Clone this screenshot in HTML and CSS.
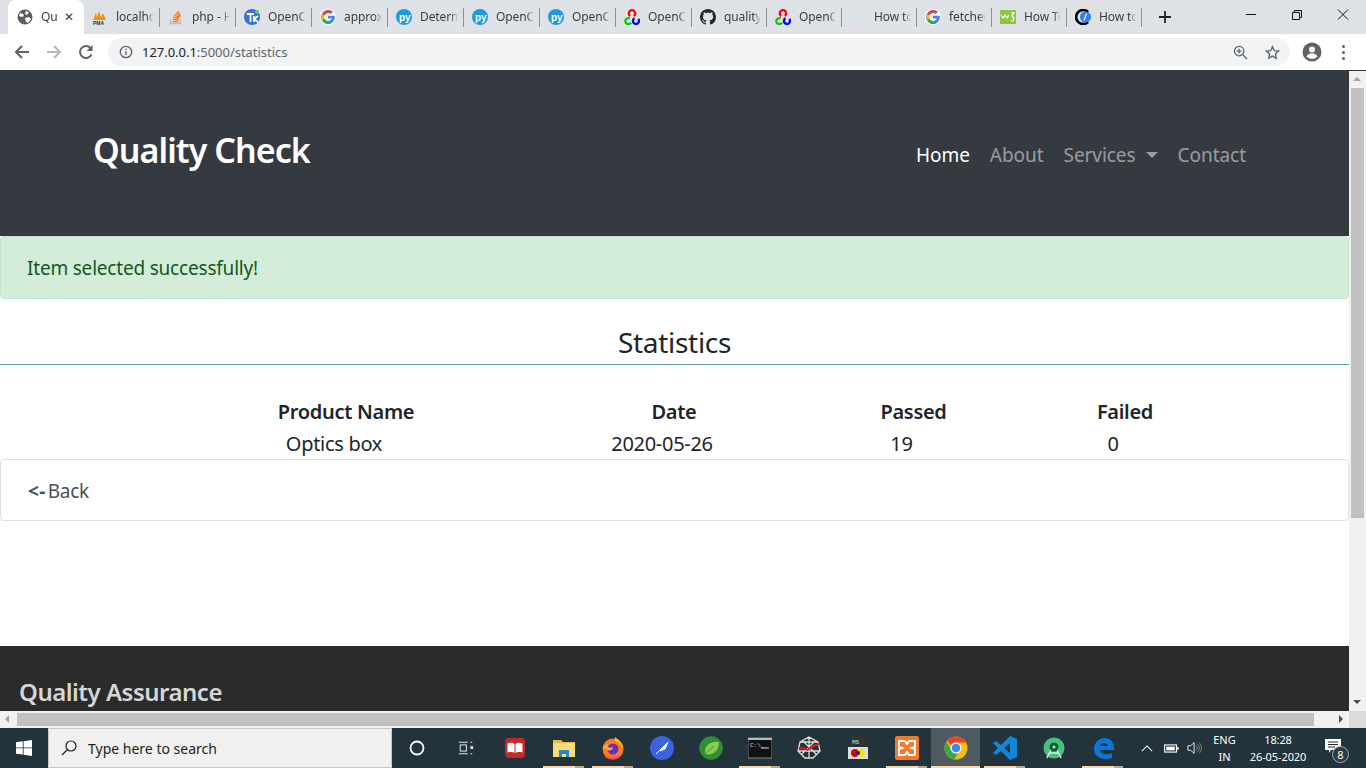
FILE: index.html
```html
<!DOCTYPE html>
<html lang="en">
<head>
<meta charset="utf-8">
<title>Quality Check</title>
<link rel="stylesheet" href="styles.css">
</head>
<body>
<div class="tabstrip">
  <div class="tab active">
    <svg class="fav" viewBox="0 0 16 16"><circle cx="8" cy="8" r="7.5" fill="#5a5d61"/><path d="M3 4l3 1 1 2-2 1-3-1zM9 2l3 1-1 2-2 1-1-2zM8 9l4-1 2 2-3 4-2-1z" fill="#fff"/></svg>
    <span class="tt">Qu</span><span class="close">✕</span>
  </div>
  <div class="tab"><svg class="fav" viewBox="0 0 16 16"><path d="M1 11l3-7 1 4 2-6 2 6 2-4 3 7z" fill="#f29111"/><text x="1" y="15.5" class="favt">PMA</text></svg><span class="tt">localhost</span></div>
  <div class="tab"><svg class="fav" viewBox="0 0 16 16"><path d="M2.500 10v4.500h10V10" fill="none" stroke="#bcbbbb" stroke-width="1.400"/><path d="M4.500 12.500h6M4.700 10.300l6 .6M5.200 8l5.800 1.500M6.300 5.600l5.200 3M8 3.500l4 4.400M10 2l2.400 5.400" stroke="#f48024" stroke-width="1.300" fill="none"/></svg><span class="tt">php - H</span></div>
  <div class="tab"><svg class="fav" viewBox="0 0 16 16"><circle cx="8" cy="8" r="8" fill="#3b6fd8"/><path d="M3 5h7M6.500 5v8M10 7v6M14 7l-4 3 4 3" stroke="#fff" stroke-width="1.800" fill="none"/><circle cx="13" cy="3" r="2" fill="#5cc96b"/></svg><span class="tt">OpenCV</span></div>
  <div class="tab"><svg class="fav" viewBox="0 0 48 48"><circle cx="24" cy="24" r="24" fill="#fff"/><path d="M43.600 20H24v8.500h11.300C33.700 33.400 29.300 36.500 24 36.500A12.500 12.500 0 1 1 32.200 14.600l6-6A21 21 0 1 0 45 24c0-1.300-.6-2.700-1.400-4z" fill="#4285f4"/><path d="M6.300 14.700l7 5.100A12.500 12.500 0 0 1 32.200 14.600l6-6A21 21 0 0 0 6.300 14.700z" fill="#ea4335"/><path d="M24 45a21 21 0 0 0 14-5.400l-6.500-5.500a12.500 12.500 0 0 1-18.300-5.700l-7 5.400A21 21 0 0 0 24 45z" fill="#34a853"/><path d="M13.200 28.400a12.500 12.500 0 0 1 0-8.600l-7-5.100a21 21 0 0 0 0 19.100z" fill="#fbbc05"/></svg><span class="tt">approx</span></div>
  <div class="tab"><svg class="fav" viewBox="0 0 16 16"><circle cx="8" cy="8" r="8" fill="#1a9be0"/><text x="3" y="11.500" class="favp">py</text></svg><span class="tt">Determ</span></div>
  <div class="tab"><svg class="fav" viewBox="0 0 16 16"><circle cx="8" cy="8" r="8" fill="#1a9be0"/><text x="3" y="11.500" class="favp">py</text></svg><span class="tt">OpenCV</span></div>
  <div class="tab"><svg class="fav" viewBox="0 0 16 16"><circle cx="8" cy="8" r="8" fill="#1a9be0"/><text x="3" y="11.500" class="favp">py</text></svg><span class="tt">OpenCV</span></div>
  <div class="tab"><svg class="fav" viewBox="0 0 16 16"><path d="M6.200 7A3.200 3.200 0 1 1 9.800 7" fill="none" stroke="#f00" stroke-width="2.300"/><path d="M5.800 9.500A3 3 0 1 0 7 13.500" fill="none" stroke="#0c0" stroke-width="2.300"/><path d="M10.500 9.300A3 3 0 1 0 14.300 10" fill="none" stroke="#00f" stroke-width="2.300"/></svg><span class="tt">OpenCV</span></div>
  <div class="tab"><svg class="fav" viewBox="0 0 16 16"><path fill="#24292e" d="M8 0C3.580 0 0 3.580 0 8c0 3.540 2.290 6.530 5.470 7.590.4.070.55-.17.55-.38 0-.19-.01-.82-.01-1.490-2.010.37-2.530-.49-2.690-.94-.09-.23-.48-.94-.82-1.130-.28-.15-.68-.52-.01-.53.630-.01 1.080.58 1.230.82.720 1.210 1.870.87 2.330.66.070-.52.280-.87.510-1.070-1.780-.2-3.640-.89-3.640-3.950 0-.87.310-1.590.820-2.150-.08-.2-.36-1.020.08-2.120 0 0 .67-.21 2.200.82.640-.18 1.320-.27 2-.27s1.360.09 2 .27c1.530-1.040 2.200-.82 2.200-.82.440 1.100.16 1.920.08 2.120.51.560.82 1.270.82 2.150 0 3.070-1.870 3.750-3.650 3.950.29.250.54.730.54 1.480 0 1.070-.01 1.930-.01 2.200 0 .21.150.46.550.38A8 8 0 0 0 16 8c0-4.420-3.580-8-8-8z"/></svg><span class="tt">quality</span></div>
  <div class="tab"><svg class="fav" viewBox="0 0 16 16"><path d="M6.200 7A3.200 3.200 0 1 1 9.800 7" fill="none" stroke="#f00" stroke-width="2.300"/><path d="M5.800 9.500A3 3 0 1 0 7 13.500" fill="none" stroke="#0c0" stroke-width="2.300"/><path d="M10.500 9.300A3 3 0 1 0 14.300 10" fill="none" stroke="#00f" stroke-width="2.300"/></svg><span class="tt">OpenCV</span></div>
  <div class="tab"><svg class="fav" viewBox="0 0 16 16"><path d="M2 5h4M9 5h5M2 8h12M3 11h8" stroke="#cfe3ef" stroke-width="1.300"/></svg><span class="tt">How to</span></div>
  <div class="tab"><svg class="fav" viewBox="0 0 48 48"><circle cx="24" cy="24" r="24" fill="#fff"/><path d="M43.600 20H24v8.500h11.300C33.700 33.400 29.300 36.500 24 36.500A12.500 12.500 0 1 1 32.200 14.600l6-6A21 21 0 1 0 45 24c0-1.300-.6-2.700-1.400-4z" fill="#4285f4"/><path d="M6.300 14.700l7 5.100A12.500 12.500 0 0 1 32.200 14.600l6-6A21 21 0 0 0 6.300 14.700z" fill="#ea4335"/><path d="M24 45a21 21 0 0 0 14-5.400l-6.500-5.500a12.500 12.500 0 0 1-18.300-5.700l-7 5.400A21 21 0 0 0 24 45z" fill="#34a853"/><path d="M13.200 28.400a12.500 12.500 0 0 1 0-8.600l-7-5.100a21 21 0 0 0 0 19.100z" fill="#fbbc05"/></svg><span class="tt">fetched</span></div>
  <div class="tab"><svg class="fav" viewBox="0 0 16 16"><rect width="16" height="14" y="1" fill="#8cc63f"/><path d="M1 6l2 3 2-3 2 3 2-3" stroke="#fff" stroke-width="1.200" fill="none"/><path d="M11 4h3l-2 3 2 2-1 3h-2" stroke="#fff" stroke-width="1.200" fill="none"/></svg><span class="tt">How To</span></div>
  <div class="tab"><svg class="fav" viewBox="0 0 16 16"><path d="M13 3A7 7 0 1 0 13 13" fill="none" stroke="#000" stroke-width="2.600"/><circle cx="10.500" cy="8" r="5.500" fill="#2f7cf6"/><path d="M9 11.500L11.500 4.500" stroke="#fff" stroke-width="1.200"/></svg><span class="tt">How to</span></div>
  <div class="newtab"><svg viewBox="0 0 12 12" class="plus"><path d="M6 0v12M0 6h12" stroke="#202124" stroke-width="1.800"/></svg></div>
  <div class="wincontrols">
    <svg class="win" viewBox="0 0 46 30"><path d="M18 14.500h10" stroke="#111" stroke-width="1"/></svg>
    <svg class="win" viewBox="0 0 46 30"><path d="M18.500 12.500h7v7h-7zM20.500 12.500v-2h7v7h-2" stroke="#111" fill="none"/></svg>
    <svg class="win" viewBox="0 0 46 30"><path d="M18 9.500l10 10M28 9.500l-10 10" stroke="#111" fill="none"/></svg>
  </div>
</div>

<div class="toolbar">
  <svg class="tool" viewBox="0 0 16 16"><path d="M15 8H2M8 2L2 8l6 6" stroke="#5f6368" stroke-width="2" fill="none"/></svg>
  <svg class="tool" viewBox="0 0 16 16"><path d="M1 8h13M8 2l6 6-6 6" stroke="#b4b7ba" stroke-width="2" fill="none"/></svg>
  <svg class="tool" viewBox="0 0 16 16"><path d="M13.500 10.500A6 6 0 1 1 12.500 4" stroke="#5f6368" stroke-width="2" fill="none"/><path d="M14.500 1v6h-6z" fill="#5f6368"/></svg>
  <div class="omnibox">
    <svg class="info" viewBox="0 0 16 16"><circle cx="8" cy="8" r="6.500" fill="none" stroke="#5f6368" stroke-width="1.500"/><path d="M8 7v4.500M8 4.200v1.500" stroke="#5f6368" stroke-width="1.600"/></svg>
    <span class="url">127.0.0.1<span class="urlpath">:5000/statistics</span></span>
    <span class="spacer"></span>
    <svg class="omni-icon" viewBox="0 0 16 16"><circle cx="6.500" cy="6.500" r="5" fill="none" stroke="#5f6368" stroke-width="1.400"/><path d="M10 10l5 5M4 6.500h5M6.500 4v5" stroke="#5f6368" stroke-width="1.400"/></svg>
    <svg class="omni-icon star" viewBox="0 0 16 16"><path d="M8 1.800l1.900 4.200 4.600.5-3.400 3.100.9 4.500-4-2.300-4 2.300.9-4.500L1.500 6.500 6.100 6z" fill="none" stroke="#5f6368" stroke-width="1.400"/></svg>
  </div>
  <svg class="avatar" viewBox="0 0 20 20"><circle cx="10" cy="10" r="9.500" fill="#5f6368"/><circle cx="10" cy="7.500" r="3" fill="#fff"/><path d="M4.500 14.500c1-2.500 3.500-3 5.500-3s4.500.5 5.500 3c-1.300 1.500-3.300 2.300-5.500 2.300s-4.200-.8-5.500-2.300z" fill="#fff"/></svg>
  <div class="dots"><i></i><i></i><i></i></div>
</div>

<div class="viewport">
  <main class="page">
    <nav class="navbar">
      <a class="brand">Quality Check</a>
      <ul class="navlinks">
        <li class="on">Home</li>
        <li>About</li>
        <li>Services<span class="caret"></span></li>
        <li>Contact</li>
      </ul>
    </nav>
    <div class="alert">Item selected successfully!</div>
    <h2 class="title">Statistics</h2>
    <table class="stats">
      <colgroup><col class="c1"><col class="c2"><col class="c3"><col class="c4"></colgroup>
      <thead><tr><th>Product Name</th><th>Date</th><th>Passed</th><th>Failed</th></tr></thead>
      <tbody><tr><td>Optics box</td><td>2020-05-26</td><td>19</td><td>0</td></tr></tbody>
    </table>
    <div class="backcard"><a class="back"><b>&lt;-</b>Back</a></div>
    <footer class="footer"><h4 class="foot-title">Quality Assurance</h4></footer>
  </main>
  <div class="vscroll">
    <span class="arrow up"></span>
    <div class="vthumb"></div>
    <span class="spacer"></span>
    <span class="arrow down"></span>
  </div>
</div>
<div class="hscroll">
  <span class="arrow left"></span>
  <div class="hthumb"></div>
  <span class="spacer"></span>
  <span class="arrow right"></span>
  <span class="corner"></span>
</div>

<div class="taskbar">
  <div class="start"><svg viewBox="0 0 16 16" class="winlogo"><path d="M0 2.300l6.800-1v6.200H0zM7.600 1.200L16 0v7.500H7.600zM0 8.300h6.800v6.300L0 13.700zM7.600 8.300H16V16l-8.400-1.200z" fill="#fff"/></svg></div>
  <div class="search">
    <svg class="lens" viewBox="0 0 16 16"><circle cx="10" cy="6" r="5" fill="none" stroke="#222" stroke-width="1.200"/><path d="M6.500 9.500L1 15" stroke="#222" stroke-width="1.300"/></svg>
    <span>Type here to search</span>
  </div>
  <div class="tb cortana"><svg viewBox="0 0 16 16" class="ti"><circle cx="8" cy="8" r="6.500" fill="none" stroke="#fff" stroke-width="1.800"/></svg></div>
  <div class="tb"><svg viewBox="0 0 18 16" class="ti"><path d="M1 1.500h10M1 14.500h10M2.500 4.500h7v7h-7zM14 1.500h2M14 14.500h2" stroke="#fff" fill="none"/><rect x="14" y="6" width="3" height="3" fill="#fff"/></svg></div>
  <div class="tb"><svg viewBox="0 0 24 24" class="ti big"><rect x="2" y="2" width="20" height="20" rx="4" fill="#c62828"/><path d="M4.500 7.500c2.500-1 5.500-1 7 .6v9c-1.500-1.300-4.500-1.300-7-.6zM19.500 7.500c-2.500-1-5.500-1-7 .6v9c1.500-1.300 4.500-1.300 7-.6z" fill="#fff"/></svg></div>
  <div class="tb open"><svg viewBox="0 0 24 20" class="ti big"><path d="M1 2h8l2 2h12v15H1z" fill="#e8b93a"/><rect x="1" y="5" width="22" height="14" fill="#fadb7a"/><path d="M7 19v-7h10v7h-3v-3h-4v3z" fill="#1f88d8"/></svg></div>
  <div class="tb open"><svg viewBox="0 0 24 24" class="ti big"><circle cx="12" cy="13" r="10.500" fill="#ff7a1a"/><path d="M14 1c4 3 8 6 8 12-2-5-5-7-8-8z" fill="#ffc107"/><path d="M3 20c3 4 14 5 18-2-5 3-13 4-18 2z" fill="#f9486b"/><circle cx="12" cy="13" r="5.500" fill="#6a2fc0"/><path d="M2 12c1-3 3-4 5-4-1 3 1 5 5 3 0 3-3 4-6 3z" fill="#ffa63d"/></svg></div>
  <div class="tb"><svg viewBox="0 0 24 24" class="ti big"><circle cx="12" cy="12" r="12" fill="#3b62e0"/><path d="M6 18L18 6M11 13l7-7-3 7-5 2z" stroke="#fff" fill="#dfe6ff"/></svg></div>
  <div class="tb"><svg viewBox="0 0 24 24" class="ti big"><circle cx="12" cy="12" r="11.500" fill="#2f8f35" stroke="#2f8f35" stroke-dasharray="2 1.500"/><path d="M6 18C5 10 11 5 20 6c0 9-6 14-14 12z" fill="#8ccb52"/><path d="M6 18l9-8" stroke="#3f9e3a"/></svg></div>
  <div class="tb open"><svg viewBox="0 0 24 20" class="ti big"><rect width="24" height="20" fill="#111" stroke="#888"/><rect width="24" height="2" fill="#bbb"/><text x="2" y="9" class="cmd">C:\_</text><path d="M13 10h8" stroke="#ddd"/></svg></div>
  <div class="tb"><svg viewBox="0 0 24 24" class="ti big"><path d="M12 1l9 5 2 9-7 7H8l-7-7 2-9zM12 1v21M1 15L23 15M3 6l18 0M5 18L19 4M5 4l14 14" fill="none" stroke="#ddd" stroke-width="1.300"/><path d="M2 13c4-4 6 3 10 0s5-4 10-5" stroke="#e01919" stroke-width="2" fill="none"/></svg></div>
  <div class="tb"><svg viewBox="0 0 24 24" class="ti big"><rect x="5" y="0" width="14" height="9" fill="#333"/><text x="6" y="7.500" class="cmd">MS</text><rect x="2" y="11" width="20" height="12" fill="#ddd"/><circle cx="9" cy="17" r="4" fill="#d0021b"/><circle cx="15" cy="17" r="4" fill="#f2e600"/><circle cx="12" cy="17" r="2" fill="#12129a"/></svg></div>
  <div class="tb open"><svg viewBox="0 0 24 24" class="ti big"><rect width="24" height="24" rx="2" fill="#f2792b"/><path d="M4 5h6l2 3 2-3h6v6l-3 1 3 1v6h-6l-2-3-2 3H4v-6l3-1-3-1z" fill="none" stroke="#fff" stroke-width="2"/></svg></div>
  <div class="tb open current"><svg viewBox="0 0 24 24" class="ti big"><circle cx="12" cy="12" r="11.500" fill="#fbbc05"/><path d="M12 .5A11.500 11.500 0 0 1 22 6.500H12a5.500 5.500 0 0 0-5 3L3 4.500A11.500 11.500 0 0 1 12 .5z" fill="#ea4335"/><path d="M2.500 5.500A11.500 11.500 0 0 0 10 23.400l4-6.500a5.500 5.500 0 0 1-7-3z" fill="#34a853"/><circle cx="12" cy="12" r="5.500" fill="#fff"/><circle cx="12" cy="12" r="4.300" fill="#4285f4"/></svg></div>
  <div class="tb open"><svg viewBox="0 0 24 24" class="ti big"><path d="M17 0l7 3v18l-7 3-9-9-5 4-3-2 5-5-5-5 3-2 5 4zM17 7l-6 5 6 5z" fill="#0e87dc" fill-rule="evenodd"/></svg></div>
  <div class="tb"><svg viewBox="0 0 24 24" class="ti big"><circle cx="12" cy="12" r="10.500" fill="#46c27a"/><path d="M5 22l7-14 7 14M8 17h8" stroke="#e3f2ea" stroke-width="1.500" fill="none"/><circle cx="12" cy="11" r="4.500" fill="#0d5c39"/><circle cx="12" cy="11" r="1.500" fill="#aee8c6"/></svg></div>
  <div class="tb open"><svg viewBox="0 0 24 24" class="ti big"><path d="M3 14C3 6 8 2 14 2c5 0 9 4 9 10v2H9c0 4 7 6 12 3v5c-6 2-12 1-15-2-2-2-3-4-3-6zM9 10h8c0-3-7-4-8 0z" fill="#0b78d7" fill-rule="evenodd"/></svg></div>
  <span class="spacer"></span>
  <div class="tray">
    <svg viewBox="0 0 14 8" class="chev"><path d="M1 7l6-6 6 6" fill="none" stroke="#fff" stroke-width="1.200"/></svg>
    <svg viewBox="0 0 16 9" class="batt"><rect x=".7" y=".7" width="12.600" height="7.600" fill="none" stroke="#fff" stroke-width="1.200"/><rect x="2.500" y="2.500" width="9" height="4" fill="#fff"/><rect x="14" y="3" width="1.500" height="3" fill="#fff"/></svg>
    <svg viewBox="0 0 18 14" class="vol"><path d="M1 4.500h3l4-3.500v12l-4-3.500H1z" fill="none" stroke="#fff"/><path d="M10 4a4 4 0 0 1 0 6M12 2.500a7 7 0 0 1 0 9M14 1a10 10 0 0 1 0 12" fill="none" stroke="#888"/></svg>
    <div class="lang"><span>ENG</span><span>IN</span></div>
    <div class="clock"><span>18:28</span><span>26-05-2020</span></div>
    <div class="notif">
      <svg viewBox="0 0 16 14" class="msg"><path d="M0 0h16v11H6l-2 3v-3H0z" fill="#fff"/><path d="M3 3h10M3 5.500h10M3 8h7" stroke="#222"/></svg>
      <span class="badge">8</span>
    </div>
  </div>
</div>
</body>
</html>
```
FILE: styles.css
```css
* { box-sizing: border-box; }
html, body { margin: 0; height: 100%; overflow: hidden; }
body { display: flex; flex-direction: column; height: 768px; font-family: "Noto Sans", "Open Sans", sans-serif; background: #fff; color: #212529; }
.spacer { flex: 1; }

.tabstrip { height: 34px; flex: none; display: flex; align-items: flex-end; background: #dee1e6; padding-left: 8px; }
.tab { width: 76px; height: 34px; flex: none; display: flex; align-items: center; padding: 0 0 1px 8px; position: relative; font-family: "Noto Sans", sans-serif; font-size: 12px; color: #3c4043; }
.tab:nth-child(n+10) { width: 75px; }
.tab::after { content: ""; position: absolute; right: 0; top: 8px; height: 19px; width: 1px; background: #8d9095; }
.tab.active { background: #fff; border-radius: 8px 8px 0 0; padding-left: 9px; }
.tab.active::after { display: none; }
.fav { width: 16px; height: 16px; flex: none; margin-right: 8px; }
.favt { font: bold 5px "Liberation Sans", sans-serif; fill: #333; }
.favp { font: bold 10px "Liberation Sans", sans-serif; fill: #fff; }
.cmd { font: 6px "Liberation Mono", monospace; fill: #ddd; }
.tt { flex: 1; overflow: hidden; white-space: nowrap; min-width: 0; letter-spacing: -.1px; -webkit-mask-image: linear-gradient(90deg, #000 80%, transparent); mask-image: linear-gradient(90deg, #000 80%, transparent); margin-right: 6px; }
.tab.active .tt { margin-right: 3px; }
.close { font-size: 12px; color: #3c4043; margin-right: 10px; font-weight: 700; font-family: "DejaVu Sans", sans-serif; }
.newtab { width: 46px; height: 34px; display: flex; align-items: center; justify-content: center; flex: none; }
.plus { width: 12px; height: 12px; }
.wincontrols { margin-left: auto; display: flex; height: 34px; align-self: flex-start; }
.win { width: 46px; height: 30px; }

.toolbar { height: 36px; flex: none; display: flex; align-items: center; background: #fff; padding: 0 0 0 14px; }
.tool { width: 16px; height: 16px; margin-right: 16px; flex: none; }
.omnibox { width: 1182px; height: 28px; margin-left: -2px; background: #f1f3f4; border-radius: 14px; display: flex; align-items: center; padding: 0 10px 0 11px; }
.info { width: 14px; height: 14px; flex: none; margin-right: 9px; }
.url { font-size: 13px; font-family: "Noto Sans", sans-serif; color: #202124; letter-spacing: -.03px; }
.urlpath { color: #5f6368; }
.omni-icon { width: 15px; height: 15px; flex: none; }
.star { margin-left: 17px; }
.avatar { width: 20px; height: 20px; flex: none; margin-left: 12px; }
.dots { display: flex; flex-direction: column; gap: 3px; margin-left: 20px; }
.dots i { width: 3px; height: 3px; border-radius: 50%; background: #5f6368; display: block; }

.viewport { height: 641px; flex: none; display: flex; border-top: 1px solid #35373b; }
.page { width: 1349px; flex: none; overflow: hidden; display: flex; flex-direction: column; }
.navbar { height: 165px; flex: none; background: #343a40; display: flex; align-items: center; justify-content: space-between; padding: 0 103px 0 93px; }
.brand { font-size: 34px; color: #fff; font-weight: 600; letter-spacing: -.95px; margin-top: -8px; }
.navlinks { list-style: none; margin: 3px 0 0; padding: 0; display: flex; gap: 20px; font-size: 19px; color: rgba(255,255,255,.5); letter-spacing: -.05px; }
.navlinks .on { color: #fff; }
.caret { display: inline-block; border: 6px solid transparent; border-top-color: rgba(255,255,255,.5); border-bottom: 0; margin-left: 10px; vertical-align: 4px; }
.alert { height: 63px; flex: none; background: #d4edda; border: 1px solid #c3e6cb; border-radius: 4px; color: #155724; font-size: 19px; letter-spacing: -.2px; padding: 0 26px; display: flex; align-items: center; }
.title { margin: 0; height: 66px; flex: none; border-bottom: 1px solid #5f9ea0; font-size: 28px; font-weight: 400; text-align: center; line-height: 86px; letter-spacing: -.3px; }
.stats { border-collapse: collapse; table-layout: fixed; width: 1079px; margin: 32px 0 0 177px; font-size: 20px; letter-spacing: -.3px; flex: none; }
.c1 { width: 338px; } .c2 { width: 318px; } .c3 { width: 161px; } .c4 { width: 262px; }
.stats th { font-weight: 600; text-align: center; padding: 0 0 2px; height: 32px; line-height: 30px; }
.stats td { text-align: center; padding: 0 24px 0 0; height: 30px; line-height: 30px; }
.backcard { height: 62px; flex: none; border: 1px solid #dfdfdf; border-radius: 4px; padding: 2px 27px 0; display: flex; align-items: center; font-size: 19px; letter-spacing: -.3px; color: #495057; }
.back b { font-weight: 700; letter-spacing: .4px; margin-right: 2px; }
.footer { margin-top: 125px; flex: 1; background: #2b2b2b; padding: 30px 19px 0; min-height: 80px; }
.foot-title { margin: 0; font-size: 24px; font-weight: 600; color: #d6d6d6; line-height: 32px; letter-spacing: -.5px; }

.vscroll { width: 17px; flex: none; background: #f1f1f1; display: flex; flex-direction: column; align-items: stretch; }
.vthumb { height: 430px; background: #c1c1c1; margin: 0 2px; flex: none; }
.hscroll { height: 17px; flex: none; background: #f1f1f1; display: flex; align-items: stretch; }
.hthumb { width: 1297px; background: #c1c1c1; margin: 2px 0; flex: none; }
.corner { width: 17px; background: #dcdcdc; flex: none; }
.arrow { position: relative; flex: none; display: block; width: 17px; height: 17px; }
.arrow::before { content: ""; position: absolute; left: 4px; top: 5px; border: 4px solid transparent; }
.arrow.up::before { border-bottom-color: #a3a3a3; border-top: 0; top: 6px; }
.arrow.down::before { border-top-color: #505050; border-bottom: 0; top: 6px; }
.arrow.left::before { border-right-color: #a3a3a3; border-left: 0; left: 5px; top: 4px; }
.arrow.right::before { border-left-color: #505050; border-right: 0; left: 7px; top: 4px; }

.taskbar { height: 40px; flex: none; display: flex; align-items: stretch; background: #22333b; color: #fff; }
.start { width: 48px; display: flex; align-items: center; justify-content: center; flex: none; }
.winlogo { width: 16px; height: 16px; }
.search { width: 344px; flex: none; background: #f0f0f0; border: 1px solid #c8c8c8; color: #222; display: flex; align-items: center; padding-left: 12px; font-size: 14px; gap: 11px; font-family: "Noto Sans", sans-serif; }
.lens { width: 16px; height: 16px; }
.tb { width: 49px; flex: none; display: flex; align-items: center; justify-content: center; position: relative; }
.tb.open::after { content: ""; position: absolute; left: 4px; right: 4px; bottom: 0; height: 2px; background: linear-gradient(90deg, #fbd9a6 78%, #b9a88c 78%); }
.tb.current::after { left: 0; right: 0; background: #fbd9a6; }
.tb.current { background: #4d5a60; }
.ti { width: 16px; height: 16px; }
.ti.big { width: 24px; height: 24px; }
.tray { display: flex; align-items: center; flex: none; font-size: 11px; font-family: "Noto Sans", sans-serif; }
.chev { width: 12px; height: 7px; margin-right: 11px; }
.batt { width: 15px; height: 9px; margin-right: 8px; }
.vol { width: 16px; height: 14px; margin-right: 9px; }
.lang { display: flex; flex-direction: column; align-items: center; line-height: 17px; width: 25px; margin-right: 12px; }
.clock { display: flex; flex-direction: column; align-items: center; line-height: 17px; width: 58px; margin-right: 18px; white-space: nowrap; letter-spacing: -.1px; }
.notif { position: relative; width: 41px; height: 100%; display: flex; align-items: center; }
.msg { width: 16px; height: 14px; margin-top: -4px; }
.badge { position: absolute; left: 7px; top: 18px; width: 17px; height: 17px; border-radius: 50%; background: #2d3a40; border: 1px solid #aaa; font-size: 11px; line-height: 15px; text-align: center; }
```
